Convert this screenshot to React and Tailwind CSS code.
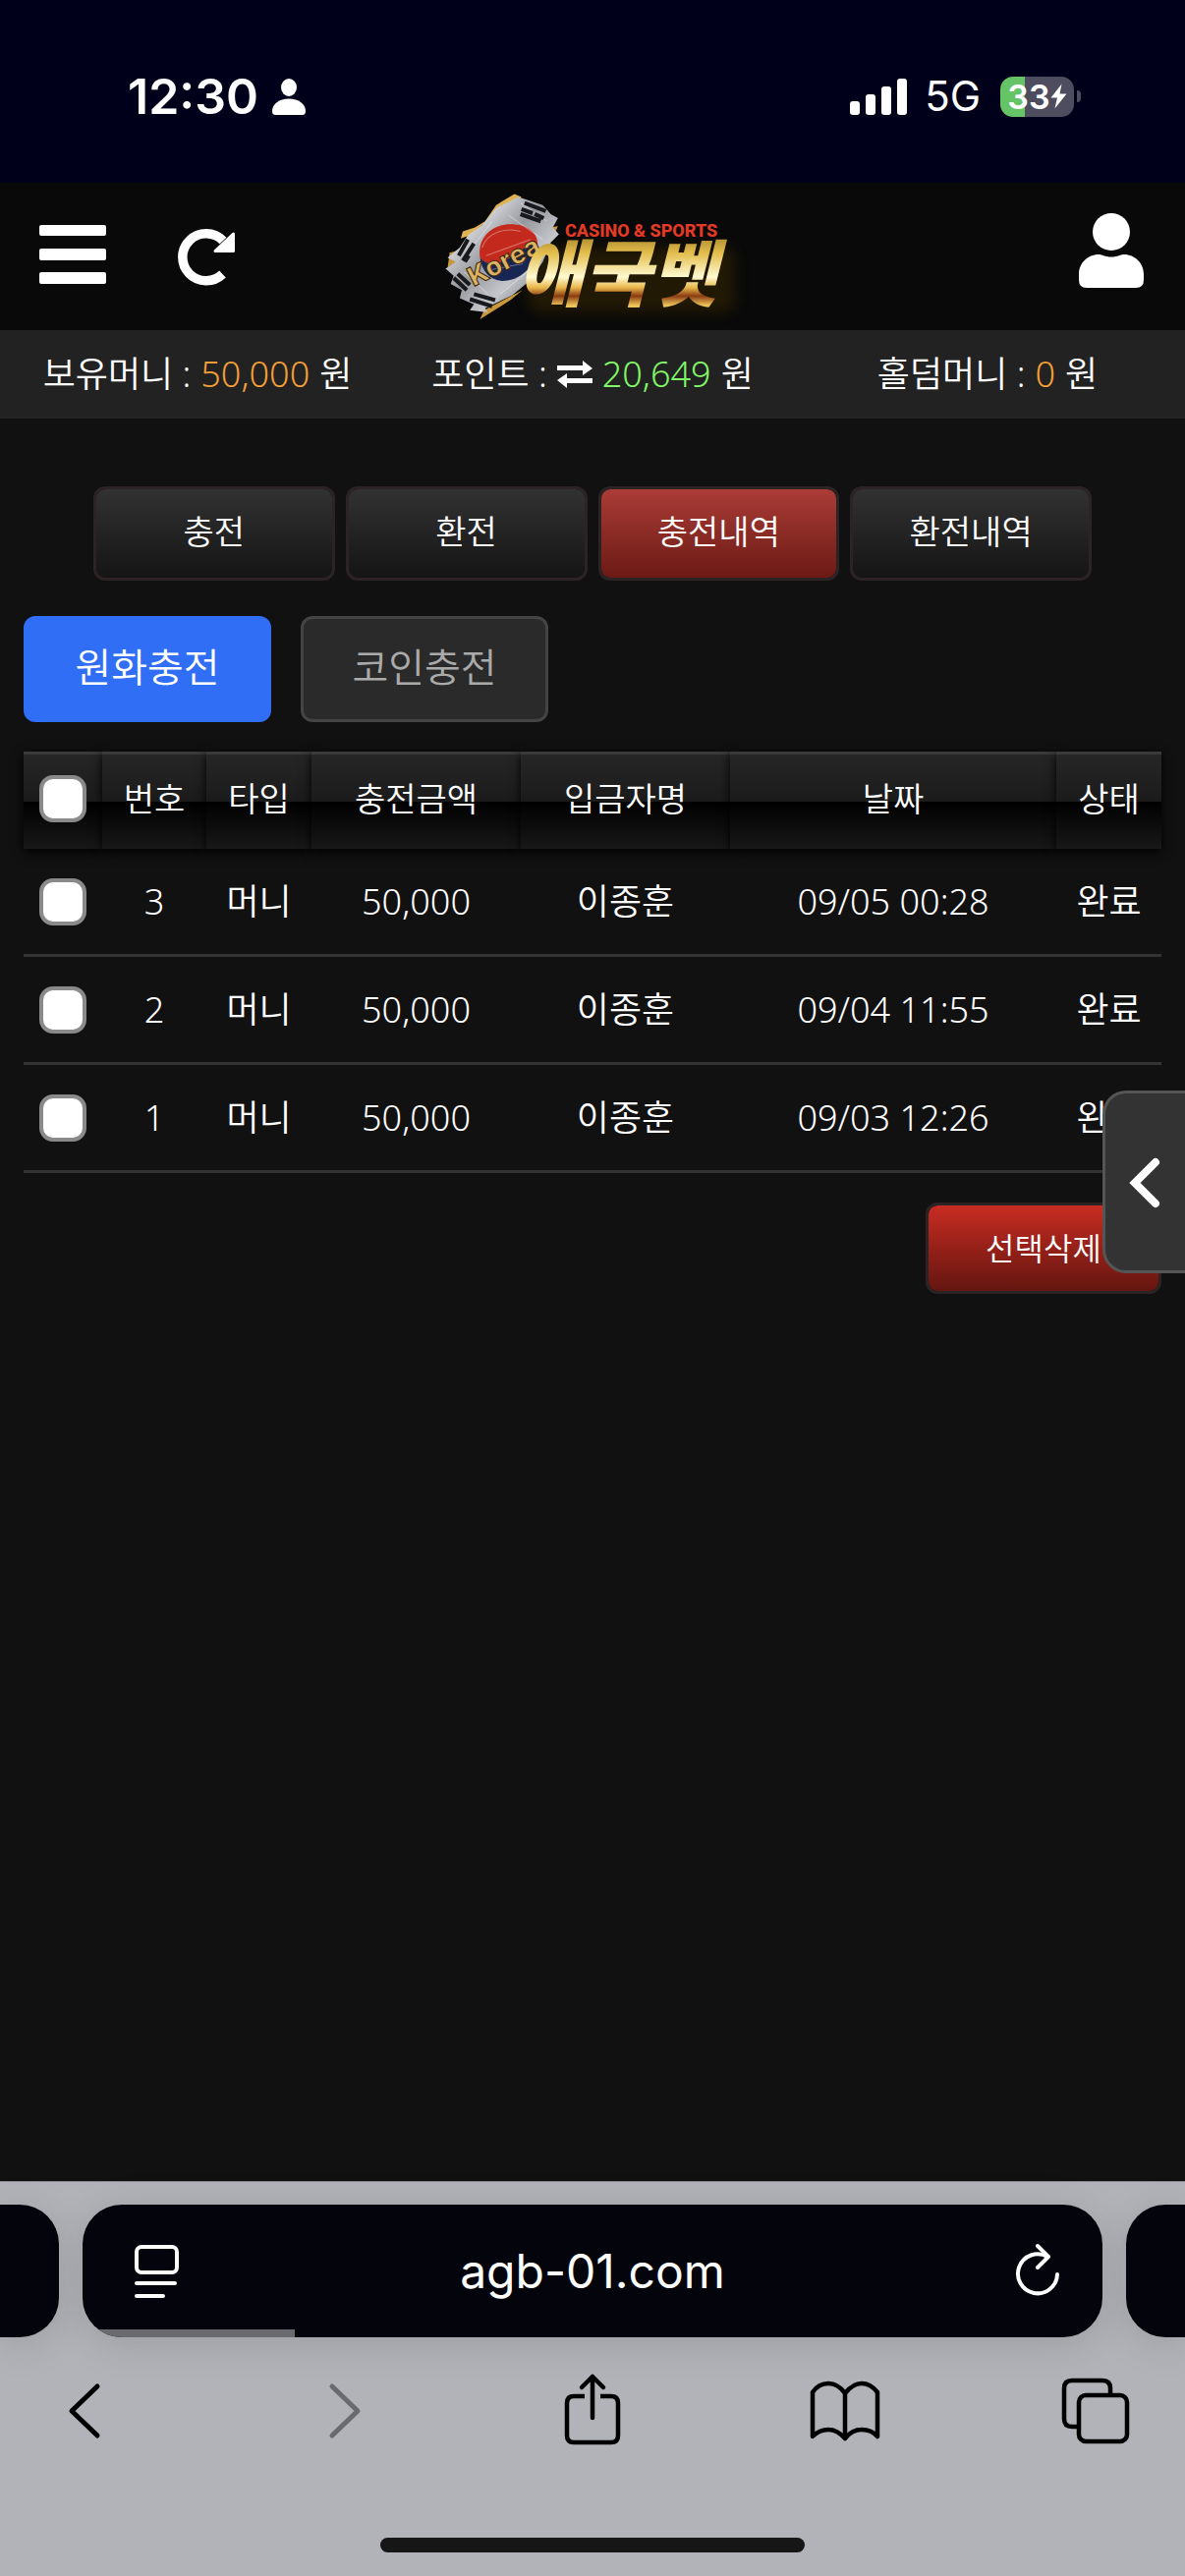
import { useState } from "react";

const tabs = ["충전", "환전", "충전내역", "환전내역"];

const rows = [
  { no: 3, type: "머니", amount: "50,000", name: "이종훈", date: "09/05 00:28", status: "완료" },
  { no: 2, type: "머니", amount: "50,000", name: "이종훈", date: "09/04 11:55", status: "완료" },
  { no: 1, type: "머니", amount: "50,000", name: "이종훈", date: "09/03 12:26", status: "완료" },
];

const heads = ["번호", "타입", "충전금액", "입금자명", "날짜", "상태"];

function StatusBar() {
  return (
    <div className="h-[186px] bg-[#00001a] px-[106px] flex justify-between text-white font-['Inter',sans-serif]">
      <div className="h-[196px] pl-6 flex items-center gap-3.5">
        <span className="text-[50px] leading-[60px] font-semibold">12:30</span>
        <svg width="34" height="37" viewBox="0 0 34 37" fill="currentColor" aria-hidden="true">
          <ellipse cx="17" cy="9" rx="8" ry="9" />
          <path d="M0 33C0 26 7 20.500 17 20.500S34 26 34 33C34 35.500 33 37 30.500 37H3.500C1 37 0 35.500 0 33Z" />
        </svg>
      </div>
      <div className="h-[196px] flex items-center">
        <svg width="58" height="37" viewBox="0 0 58 37" fill="currentColor" aria-hidden="true">
          <rect x="0" y="23" width="10" height="14" rx="3" />
          <rect x="16" y="16" width="10" height="21" rx="3" />
          <rect x="32" y="8" width="10" height="29" rx="3" />
          <rect x="48" y="0" width="10" height="37" rx="3" />
        </svg>
        <span className="ml-[18px] text-[42px] leading-[50px]">5G</span>
        <div className="ml-5 h-[41px] w-[75px] rounded-[13px] bg-linear-to-r from-[#65c466] from-33% to-[#4d4d5f] to-33% flex items-center justify-center">
          <span className="text-[34px] leading-[41px] font-semibold">33</span>
          <svg width="17" height="26" viewBox="0 0 17 26" fill="currentColor" aria-hidden="true">
            <path d="M11.500 0.500L0.500 14.500H7L4.500 25.500L16.500 10.500H9.500Z" />
          </svg>
        </div>
        <div className="ml-[3px] h-3 w-1 rounded-r-full bg-[#4d4d5f]"></div>
      </div>
    </div>
  );
}

function Logo() {
  return (
    <svg width="320" height="150" viewBox="0 0 320 150" role="img" aria-label="애국벳">
      <defs>
        <linearGradient id="gold" x1="0" y1="0" x2="0" y2="1">
          <stop offset="0.100" stopColor="#8a6d1c" />
          <stop offset="0.350" stopColor="#e3bd4c" />
          <stop offset="0.580" stopColor="#fffad2" />
          <stop offset="0.680" stopColor="#e8b64a" />
          <stop offset="0.760" stopColor="#8a3c12" />
          <stop offset="0.850" stopColor="#f0c65c" />
          <stop offset="1" stopColor="#a87a20" />
        </linearGradient>
        <linearGradient id="cloth" x1="0" y1="0" x2="1" y2="1">
          <stop offset="0" stopColor="#7d8087" />
          <stop offset="0.250" stopColor="#d4d5d9" />
          <stop offset="0.450" stopColor="#96989e" />
          <stop offset="0.650" stopColor="#c4c6cb" />
          <stop offset="1" stopColor="#44474d" />
        </linearGradient>
        <filter id="glow" x="-20%" y="-20%" width="140%" height="140%">
          <feGaussianBlur stdDeviation="7" />
        </filter>
      </defs>
      <rect x="96" y="66" width="210" height="66" rx="12" fill="#4a3205" opacity="0.400" filter="url(#glow)" />
      <g transform="translate(-5 -2) scale(1.030)">
        <path d="M84 13L91 16L62 38L52 44L40 54L31 57L33 50L45 46L55 40L66 24Z" fill="#e0b352" />
        <path d="M20 71L32 68L30 78L18 86ZM118 46L127 45L122 56L110 62ZM50 137L54 128L92 108L80 118Z" fill="#c9983b" />
        <path d="M66 27L88 16L112 24L120 33L127 37L122 46L128 53L120 61L112 80L100 98L82 113L55 126L58 130L40 128L44 122L30 116L32 108L21 102L24 94L16 87L26 80L18 76L30 66L38 54L52 44Z" fill="url(#cloth)" />
        <path d="M50 76C47 56 62 43 80 43C97 43 107 51 107 63C98 62 92 68 82 74C72 82 58 86 50 76Z" fill="#c4291d" />
        <path d="M50 76C58 86 72 82 82 74C92 68 98 62 107 63C106 82 92 99 72 99C60 98 52 90 50 76Z" fill="#182654" />
        <path d="M52 66C58 50 76 46 90 50M56 74L100 58M60 88L92 82M36 74L62 40M70 112L104 84M90 22L116 40M78 34L112 58M34 90L58 112" stroke="#ffffff" strokeWidth="1" opacity="0.350" fill="none" />
        <path d="M94 22L115 30M91 28L102 32M104 33L113 37M90 33L110 40" stroke="#17191d" strokeWidth="4" />
        <path d="M38 58L29 74M44 62L33 79M35 80L39 74M24 96L37 108M28 92L40 103M40 117L62 124M44 112L65 118" stroke="#17191d" strokeWidth="4" />
      </g>
      <text x="40" y="106" transform="rotate(-27 40 106)" fontFamily="Inter, sans-serif" fontSize="27" fontWeight="800" fill="#dcb264" stroke="#3b2508" strokeWidth="1">Korea</text>
      <text x="133" y="55" fontFamily="Roboto, sans-serif" fontSize="18" fontWeight="800" fill="#e33a26">CASINO &amp; SPORTS</text>
      <text x="84" y="120" fontFamily="'Noto Sans CJK KR', sans-serif" fontSize="74" fontWeight="900" fontStyle="italic" fill="url(#gold)">애국벳</text>
    </svg>
  );
}

function Header() {
  return (
    <header className="h-[150px] bg-[#090909] pl-10 pr-[42px] flex items-center justify-between text-white">
      <div className="w-64 flex items-center gap-[72px]">
        <button type="button" aria-label="메뉴">
          <svg width="69" height="76" viewBox="0 0 69 76" fill="currentColor">
            <rect x="0" y="6" width="68" height="11" rx="2" />
            <rect x="0" y="30" width="68" height="12" rx="2" />
            <rect x="0" y="54" width="68" height="12" rx="2" />
          </svg>
        </button>
        <button type="button" aria-label="새로고침">
          <svg width="60" height="60" viewBox="0 0 60 60" fill="none" stroke="currentColor" strokeWidth="9.500">
            <path d="M45.500 48A24 24 0 1 1 46 14" />
            <path d="M56.500 7V24.500H38Z" fill="currentColor" strokeWidth="3" strokeLinejoin="round" />
          </svg>
        </button>
      </div>
      <a href="#home"><Logo /></a>
      <div className="w-64 flex justify-end">
        <button type="button" aria-label="내 정보">
          <svg width="66" height="88" viewBox="0 0 66 88" fill="currentColor">
            <circle cx="33" cy="19" r="19" />
            <path d="M20 42C24 42 26 44.500 33 44.500S42 42 46 42C57 42 66 51 66 62V68Q66 76 58 76H8Q0 76 0 68V62C0 51 9 42 20 42Z" />
          </svg>
        </button>
      </div>
    </header>
  );
}

function MoneyBar() {
  return (
    <div className="h-[90px] bg-[#222] grid grid-cols-3 items-center text-[36px] leading-[52px] font-[350] text-white [&_p]:flex [&_p]:items-center [&_p]:justify-center [&_p]:gap-2.5">
      <p>
        <span>보유머니 :</span>
        <span className="text-[#f19e38]">50,000</span>
        <span>원</span>
      </p>
      <p>
        <span>포인트 :</span>
        <svg width="36" height="28" viewBox="0 0 36 28" fill="currentColor" aria-hidden="true">
          <path d="M0 5H26V0L36 8L26 15V10H0ZM36 18H10V13L0 20L10 28V23H36Z" />
        </svg>
        <span className="text-[#81f767]">20,649</span>
        <span>원</span>
      </p>
      <p>
        <span>홀덤머니 :</span>
        <span className="text-[#f19e38]">0</span>
        <span>원</span>
      </p>
    </div>
  );
}

function Check({ label, checked, onChange }) {
  return (
    <input
      type="checkbox"
      aria-label={label}
      checked={checked}
      onChange={onChange}
      className="block mx-auto size-12 appearance-none rounded-[14px] border-4 border-[#8a8a8a] bg-white checked:bg-[#316ef6]"
    />
  );
}

function HistoryTable() {
  const [selected, setSelected] = useState([]);

  const toggle = (no) => {
    setSelected(selected.includes(no) ? selected.filter((n) => n !== no) : [...selected, no]);
  };

  const toggleAll = () => {
    setSelected(selected.length === rows.length ? [] : rows.map((r) => r.no));
  };

  const thClass =
    "h-[99px] p-0 pb-1.5 border-t-[3px] border-[#3a3a3a] font-[350] bg-[linear-gradient(#262626,#1b1b1b_50%,#000_50%,#181818)] shadow-[0_3px_10px_#000]";

  return (
    <table className="w-full table-fixed border-separate border-spacing-0 text-center text-white">
      <colgroup>
        <col className="w-[80px]" />
        <col className="w-[106px]" />
        <col className="w-[107px]" />
        <col className="w-[213px]" />
        <col className="w-[213px]" />
        <col />
        <col className="w-[107px]" />
      </colgroup>
      <thead className="text-[34px] leading-[50px]">
        <tr>
          <th className={thClass}>
            <Check label="전체선택" checked={selected.length === rows.length} onChange={toggleAll} />
          </th>
          {heads.map((head) => (
            <th key={head} className={thClass}>{head}</th>
          ))}
        </tr>
      </thead>
      <tbody className="text-[36px] leading-[52px] font-[350] [&_td]:h-[110px] [&_td]:p-0 [&_td]:border-b-[3px] [&_td]:border-[#333]">
        {rows.map((row) => (
          <tr key={row.no}>
            <td>
              <Check label={`${row.no}번 선택`} checked={selected.includes(row.no)} onChange={() => toggle(row.no)} />
            </td>
            <td>{row.no}</td>
            <td>{row.type}</td>
            <td>{row.amount}</td>
            <td>{row.name}</td>
            <td>{row.date}</td>
            <td>{row.status}</td>
          </tr>
        ))}
      </tbody>
    </table>
  );
}

function BrowserBar() {
  return (
    <footer className="h-[402px] border-t border-[#8f8d93] bg-[#b2b3b8] font-['Inter',sans-serif]">
      <div className="mt-[23px] flex gap-6">
        <div className="h-[135px] w-[60px] rounded-r-[40px] bg-[#04050c] shadow-[0_6px_40px_#00000020]"></div>
        <div className="flex-1 rounded-[40px] shadow-[0_6px_40px_#00000020]">
          <div className="relative h-[135px] overflow-hidden rounded-[40px] bg-[#04050c] pl-[50px] pr-10 flex items-center justify-between text-white">
            <button type="button" aria-label="페이지 메뉴">
              <svg width="50" height="60" viewBox="0 0 50 60" fill="none" stroke="currentColor" strokeWidth="4" strokeLinecap="round">
                <rect x="5" y="5" width="41" height="26" rx="5" />
                <path d="M5 42H44M5 55H32" />
              </svg>
            </button>
            <span className="pr-2.5 text-[48px] leading-[60px]">agb-01.com</span>
            <button type="button" aria-label="새로고침">
              <svg width="50" height="60" viewBox="0 0 50 60" fill="none" stroke="currentColor" strokeWidth="4" strokeLinecap="round" strokeLinejoin="round">
                <path d="M44 33A20 20 0 1 1 34 15" />
                <path d="M24 4L35 15L24 26" />
              </svg>
            </button>
            <div className="absolute bottom-0 left-0 h-2 w-[216px] bg-[#6a696d]"></div>
          </div>
        </div>
        <div className="h-[135px] w-[60px] rounded-l-[40px] bg-[#04050c] shadow-[0_6px_40px_#00000020]"></div>
      </div>
      <nav className="mt-[35px] px-[46px] flex justify-between text-black">
        <button type="button" aria-label="뒤로">
          <svg width="80" height="80" viewBox="0 0 80 80" fill="none" stroke="currentColor" strokeWidth="5" strokeLinecap="round" strokeLinejoin="round">
            <path d="M53 15L27 40L53 65" />
          </svg>
        </button>
        <button type="button" aria-label="앞으로" className="text-[#6a696d]">
          <svg width="80" height="80" viewBox="0 0 80 80" fill="none" stroke="currentColor" strokeWidth="5" strokeLinecap="round" strokeLinejoin="round">
            <path d="M33 15L59 40L33 65" />
          </svg>
        </button>
        <button type="button" aria-label="공유">
          <svg width="80" height="80" viewBox="0 0 80 80" fill="none" stroke="currentColor" strokeWidth="4.500" strokeLinejoin="round">
            <path d="M32 25H21Q14 25 14 32V65Q14 72 21 72H59Q66 72 66 65V32Q66 25 59 25H48" />
            <path d="M40 47V5M29 16L40 5L51 16" strokeLinecap="round" />
          </svg>
        </button>
        <button type="button" aria-label="책갈피">
          <svg width="80" height="80" viewBox="0 0 80 80" fill="none" stroke="currentColor" strokeWidth="4.500" strokeLinecap="round" strokeLinejoin="round">
            <path d="M38 22Q31 12 21 12T5 21V66Q12 59 21 59T38 68Q45 59 55 59T71 66V21Q64 12 55 12T38 22V68" />
          </svg>
        </button>
        <button type="button" aria-label="탭">
          <svg width="80" height="80" viewBox="0 0 80 80" fill="none" stroke="currentColor" strokeWidth="4.500">
            <path d="M19 56H11Q3 56 3 48V17Q3 9 11 9H42Q50 9 50 17V24" />
            <rect x="18" y="24" width="49" height="47" rx="7" />
          </svg>
        </button>
      </nav>
      <div className="mx-auto mt-[89px] h-[15px] w-[432px] rounded-full bg-[#161616]"></div>
    </footer>
  );
}

export default function App() {
  const [tab, setTab] = useState("충전내역");

  return (
    <div className="min-h-screen flex flex-col bg-[#111] font-['Noto_Sans','Noto_Sans_CJK_KR',sans-serif]">
      <StatusBar />
      <Header />
      <MoneyBar />
      <main className="relative flex-1 pt-[69px]">
        <div className="px-[95px] grid grid-cols-4 gap-[11px]">
          {tabs.map((name) => (
            <button
              key={name}
              type="button"
              onClick={() => setTab(name)}
              className={`h-24 pb-1 rounded-xl border-[3px] border-[#2c2424] bg-linear-to-b bg-clip-padding text-[34px] leading-[50px] font-[350] text-white ${
                tab === name ? "from-[#ab3c37] to-[#6c1a14]" : "from-[#323232] to-[#151515]"
              }`}
            >
              {name}
            </button>
          ))}
        </div>
        <div className="mt-9 px-6 flex gap-[30px] text-[40px] leading-[58px] font-[350]">
          <button type="button" className="h-[108px] w-[252px] pb-1 rounded-xl bg-[#316ef6] text-white">원화충전</button>
          <button type="button" className="h-[108px] w-[252px] pb-1 rounded-xl border-[3px] border-[#444] bg-[#2a2a2a] text-[#aaa]">코인충전</button>
        </div>
        <div className="mt-[30px] px-6">
          <HistoryTable />
          <div className="mt-[30px] flex justify-end">
            <button type="button" className="h-[93px] w-[240px] rounded-xl border-[3px] border-[#2c2424] bg-linear-to-b from-[#c92c22] to-[#651610] bg-clip-padding text-[32px] leading-[46px] font-[350] text-white">
              선택삭제
            </button>
          </div>
        </div>
        {/* floating drawer handle */}
        <button
          type="button"
          aria-label="사이드 메뉴 열기"
          className="absolute right-0 top-[684px] h-[186px] w-[84px] rounded-l-3xl border-[3px] border-r-0 border-[#555] bg-[#333] pl-6 text-white"
        >
          <svg width="34" height="56" viewBox="0 0 34 56" fill="none" stroke="currentColor" strokeWidth="8" strokeLinecap="round" strokeLinejoin="miter">
            <path d="M27 8L6 29L27 50" />
          </svg>
        </button>
      </main>
      <BrowserBar />
    </div>
  );
}
